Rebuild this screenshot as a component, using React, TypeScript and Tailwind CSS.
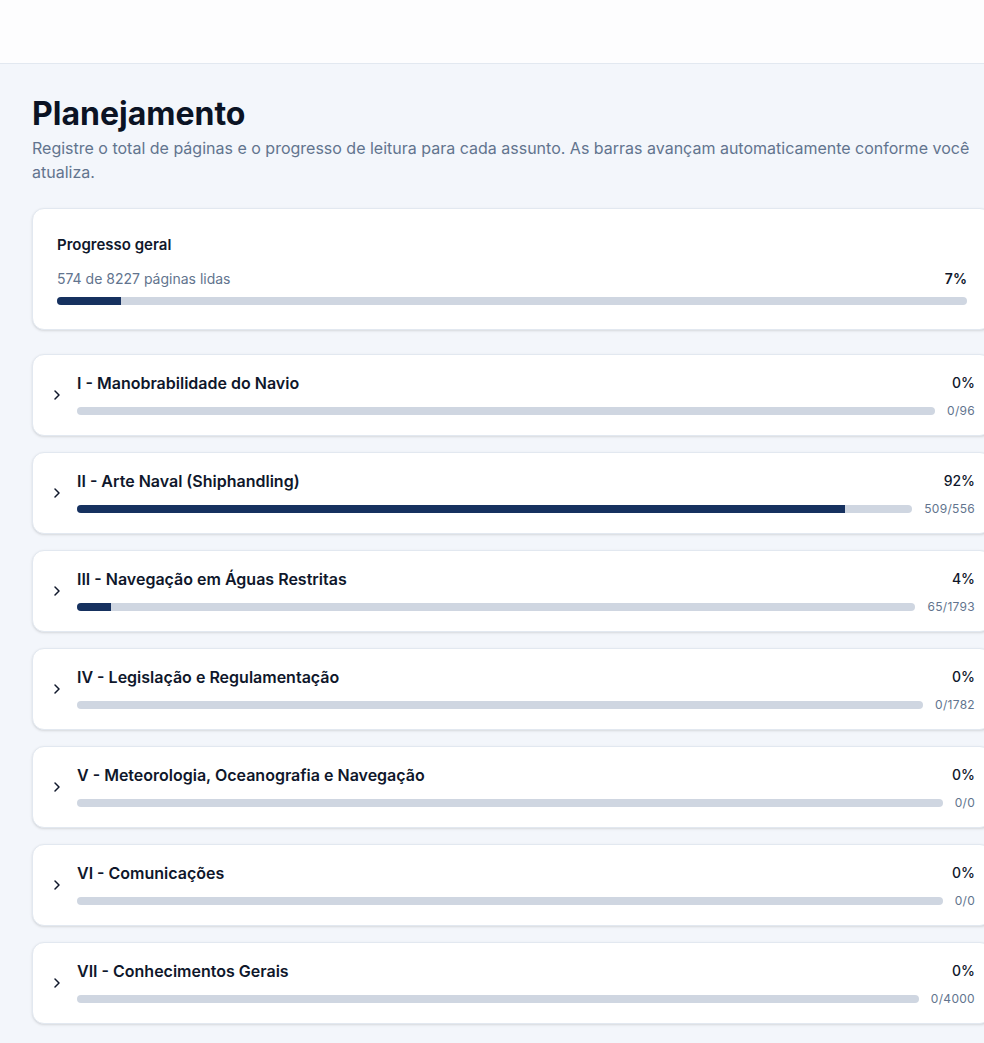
import { ChevronRight } from "lucide-react";

type Subject = {
  title: string;
  read: number;
  total: number;
};

const subjects: Subject[] = [
  { title: "I - Manobrabilidade do Navio", read: 0, total: 96 },
  { title: "II - Arte Naval (Shiphandling)", read: 509, total: 556 },
  { title: "III - Navegação em Águas Restritas", read: 65, total: 1793 },
  { title: "IV - Legislação e Regulamentação", read: 0, total: 1782 },
  { title: "V - Meteorologia, Oceanografia e Navegação", read: 0, total: 0 },
  { title: "VI - Comunicações", read: 0, total: 0 },
  { title: "VII - Conhecimentos Gerais", read: 0, total: 4000 },
];

function percentOf(read: number, total: number) {
  if (total <= 0) return 0;
  return Math.round((read / total) * 100);
}

function ProgressBar({ value }: { value: number }) {
  return (
    <div className="h-2 w-full overflow-hidden rounded-full bg-[#cfd6e1]">
      <div className="h-full bg-[#16315f]" style={{ width: `${value}%` }} />
    </div>
  );
}

function SubjectCard({ subject }: { subject: Subject }) {
  const pct = percentOf(subject.read, subject.total);
  return (
    <div className="flex items-center gap-3 rounded-xl border border-slate-200 bg-white p-4 shadow-sm">
      <ChevronRight className="h-4 w-4 shrink-0 text-slate-900" strokeWidth={2.25} />
      <div className="min-w-0 flex-1">
        <div className="flex items-center justify-between">
          <p className="text-base font-semibold leading-6 text-slate-900">{subject.title}</p>
          <span className="text-sm font-medium text-slate-900">{pct}%</span>
        </div>
        <div className="mt-2 flex items-center gap-3">
          <div className="flex-1">
            <ProgressBar value={pct} />
          </div>
          <span className="text-xs leading-4 tracking-wide text-slate-500">
            {subject.read}/{subject.total}
          </span>
        </div>
      </div>
    </div>
  );
}

export default function App() {
  const totalRead = subjects.reduce((sum, s) => sum + s.read, 0);
  const totalPages = subjects.reduce((sum, s) => sum + s.total, 0);
  const overall = percentOf(totalRead, totalPages);

  return (
    <div
      className="min-h-screen w-full overflow-hidden bg-[#f3f6fb] text-slate-900"
      style={{ fontFamily: "Inter, 'Noto Sans', sans-serif" }}
    >
      <header className="h-16 border-b border-slate-200 bg-[#fdfdfe]" />
      <main className="w-[1024px] px-8 pb-8 pt-8">
        <div className="w-[960px]">
          <h1 className="text-[32px] font-bold leading-9 text-[#0b1324]">Planejamento</h1>
          <p className="mt-1 text-base leading-6 text-slate-500">
            Registre o total de páginas e o progresso de leitura para cada assunto. As barras avançam
            automaticamente conforme você atualiza.
          </p>

          <section className="mt-6 rounded-xl border border-slate-200 bg-white p-6 shadow-sm">
            <h2 className="text-[15px] font-semibold leading-6 text-slate-900">Progresso geral</h2>
            <div className="mt-3 flex items-center justify-between text-sm leading-5">
              <span className="text-slate-500">
                {totalRead} de {totalPages} páginas lidas
              </span>
              <span className="font-semibold text-slate-900">{overall}%</span>
            </div>
            <div className="mt-2">
              <ProgressBar value={overall} />
            </div>
          </section>

          <div className="mt-6 space-y-4">
            {subjects.map((s) => (
              <SubjectCard key={s.title} subject={s} />
            ))}
          </div>
        </div>
      </main>
    </div>
  );
}
